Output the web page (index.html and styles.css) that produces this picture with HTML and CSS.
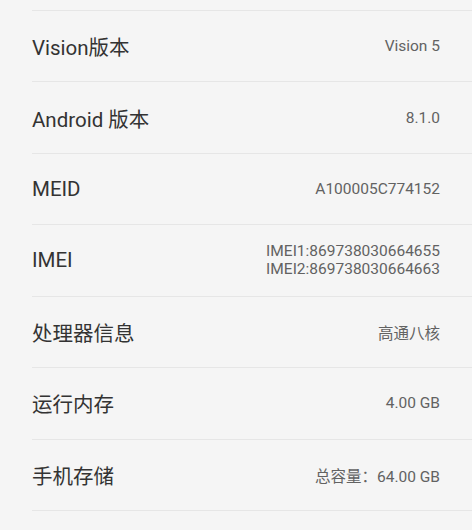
FILE: index.html
```html
<!DOCTYPE html>
<html lang="zh-CN">
<head>
    <meta charset="UTF-8">
    <meta name="viewport" content="width=device-width, initial-scale=1.0">
    <title>关于手机</title>
    <link rel="stylesheet" href="styles.css">
</head>
<body>
    <!-- 手机信息列表 -->
    <div class="info-list">
        <div class="info-row">
            <span class="label">Vision版本</span>
            <span class="value">Vision 5</span>
        </div>
        <div class="info-row">
            <span class="label">Android 版本</span>
            <span class="value">8.1.0</span>
        </div>
        <div class="info-row">
            <span class="label">MEID</span>
            <span class="value">A100005C774152</span>
        </div>
        <div class="info-row">
            <span class="label">IMEI</span>
            <span class="value multi">IMEI1:869738030664655<br>IMEI2:869738030664663</span>
        </div>
        <div class="info-row">
            <span class="label">处理器信息</span>
            <span class="value">高通八核</span>
        </div>
        <div class="info-row">
            <span class="label">运行内存</span>
            <span class="value">4.00 GB</span>
        </div>
        <div class="info-row">
            <span class="label">手机存储</span>
            <span class="value">总容量：64.00 GB</span>
        </div>
    </div>
</body>
</html>
```

FILE: styles.css
```css
/* 整体背景与字体 */
body {
    margin: 0;
    padding: 0;
    background-color: #f5f5f5;
    font-family: Roboto, "Noto Sans CJK SC", sans-serif;
}

/* 列表容器，左侧留白，分隔线延伸到右边 */
.info-list {
    margin-left: 32px;
    padding-top: 10px;
}

/* 每一行 */
.info-row {
    box-sizing: border-box;
    height: 71.43px;
    border-top: 1px solid #e6e6e6;
    padding-right: 32px;
    display: flex;
    justify-content: space-between;
    align-items: center;
}

.info-row:last-child {
    border-bottom: 1px solid #e6e6e6;
    height: 72.43px;
}

/* 左侧标题 */
.label {
    font-size: 20.5px;
    color: #333;
}

/* 右侧数值 */
.value {
    font-size: 15.5px;
    color: #626262;
    text-align: right;
}

.value.multi {
    line-height: 18px;
}
```
